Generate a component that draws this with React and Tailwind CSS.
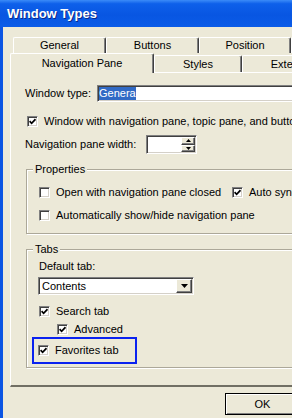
const sunken =
  'border border-t-[#808080] border-l-[#808080] border-b-white border-r-white shadow-[inset_1px_1px_0_#404040,inset_-1px_-1px_0_#d4d0c8]'
const raised =
  'border border-t-white border-l-white border-b-[#404040] border-r-[#404040] shadow-[inset_-1px_-1px_0_#808080] bg-[#ece9d8]'

function Box({ on }) {
  return (
    <span className={`w-[11px] h-[11px] shrink-0 bg-white flex items-center justify-center ${sunken}`}>
      {on && (
        <svg width="7" height="7" viewBox="0 0 7 7">
          <polyline points="0.6,3.2 2.6,5.3 6.5,1.2" fill="none" stroke="#000" strokeWidth="1.7" />
        </svg>
      )}
    </span>
  )
}

function Check({ on, children, className = '' }) {
  return (
    <div className={`flex items-center h-[16px] shrink-0 ${className}`}>
      <Box on={on} />
      <span className="ml-[6px] whitespace-nowrap">{children}</span>
    </div>
  )
}

const backRow = [
  ['General', 'w-[93px]'],
  ['Buttons', 'w-[93px]'],
  ['Position', 'w-[92px]'],
  ['Files', 'w-[80px]']
]

const tabEdge =
  'shrink-0 flex items-center justify-center whitespace-nowrap border-t border-l border-white border-r border-r-[#404040] shadow-[inset_-1px_0_0_#808080] rounded-t-[2px]'

export default function App() {
  return (
    <div className="w-[292px] h-[418px] overflow-hidden flex flex-col bg-[#ece9d8] text-[11px] leading-[13px] text-black font-['Liberation_Sans',Arial,sans-serif]">
      <div className="h-[27px] shrink-0 flex items-center pl-[7px] bg-[linear-gradient(180deg,#3b8bf8_0%,#0e60ea_14%,#0856e2_55%,#0b5ce8_100%)]">
        <span className="text-white font-bold text-[13px] [text-shadow:1px_1px_0_#0b2a8a]">Window Types</span>
      </div>

      <div className="flex flex-1 min-h-0">
        <div className="w-[3px] shrink-0 bg-[#0b55e3]" />
        <div className="flex-1 min-w-0 flex flex-col pt-[10px]">
          {/* back tab row */}
          <div className="flex h-[16px] ml-[10px] shrink-0">
            {backRow.map(([t, w]) => (
              <div key={t} className={`${tabEdge} ${w} h-[16px]`}>{t}</div>
            ))}
          </div>

          {/* front tab row */}
          <div className="flex h-[19px] ml-[7px] shrink-0 items-start">
            <div className={`${tabEdge} relative z-10 w-[144px] h-[20px] bg-[#ece9d8] pb-[1px]`}>Navigation Pane</div>
            <div className={`${tabEdge} w-[88px] h-[17px] mt-[2px]`}>Styles</div>
            <div className={`${tabEdge} w-[137px] h-[17px] mt-[2px]`}>Extended Styles</div>
          </div>

          {/* tab panel */}
          <div className="w-[300px] h-[315px] ml-[7px] shrink-0 flex flex-col border-t border-l border-white border-r border-r-[#716f64] border-b-2 border-b-[#716f64]">
            <div className="flex items-center h-[17px] mt-[12px] ml-[14px]">
              <span className="w-[72px] shrink-0">Window type:</span>
              <div className={`flex-1 h-[17px] bg-white flex items-center pl-[1px] ${sunken}`}>
                <span className="bg-[#316ac5] text-white">Genera</span>
              </div>
            </div>

            <Check on className="mt-[11px] ml-[16px]">Window with navigation pane, topic pane, and buttons</Check>

            <div className="flex items-center h-[19px] mt-[6px] ml-[14px]">
              <span className="w-[121px] shrink-0">Navigation pane width:</span>
              <div className={`w-[51px] h-[19px] bg-white flex justify-end ${sunken} p-[1px]`}>
                <div className="w-[14px] flex flex-col">
                  <div className={`flex-1 flex items-center justify-center ${raised}`}>
                    <svg width="5" height="3" viewBox="0 0 5 3"><polygon points="2.5,0 5,3 0,3" fill="#000" /></svg>
                  </div>
                  <div className={`flex-1 flex items-center justify-center ${raised}`}>
                    <svg width="5" height="3" viewBox="0 0 5 3"><polygon points="0,0 5,0 2.5,3" fill="#000" /></svg>
                  </div>
                </div>
              </div>
            </div>

            <fieldset className="mt-[9px] ml-[15px] w-[270px] border border-[#aca899] shadow-[inset_1px_1px_0_#fff,1px_1px_0_#fff] pb-[10px]">
              <legend className="ml-[6px] px-[2px] bg-[#ece9d8]">Properties</legend>
              <div className="flex mt-[8px] ml-[12px]">
                <Check className="w-[193px]">Open with navigation pane closed</Check>
                <Check on>Auto synchronize</Check>
              </div>
              <Check className="mt-[7px] ml-[12px]">Automatically show/hide navigation pane</Check>
            </fieldset>

            <fieldset className="mt-[9px] ml-[15px] w-[270px] border border-[#aca899] shadow-[inset_1px_1px_0_#fff,1px_1px_0_#fff] pb-[3px]">
              <legend className="ml-[6px] px-[2px] bg-[#ece9d8]">Tabs</legend>
              <div className="mt-[4px] ml-[12px] h-[13px]">Default tab:</div>
              <div className={`mt-[4px] ml-[11px] w-[156px] h-[18px] bg-white flex items-center ${sunken} p-[1px]`}>
                <span className="flex-1 pl-[2px]">Contents</span>
                <div className={`w-[16px] h-full flex items-center justify-center ${raised}`}>
                  <svg width="7" height="4" viewBox="0 0 7 4"><polygon points="0,0 7,0 3.5,4" fill="#000" /></svg>
                </div>
              </div>
              <Check on className="mt-[8px] ml-[12px]">Search tab</Check>
              <Check on className="mt-[2px] ml-[30px]">Advanced</Check>
              <div className="ml-[5px] w-[105px] h-[27px] border-2 border-[#0a22f0] flex items-center pl-[4px]">
                <Check on>Favorites tab</Check>
              </div>
            </fieldset>
          </div>

          <button className="mt-[6px] ml-[222px] w-[75px] h-[22px] shrink-0 border border-black bg-[#ece9d8] shadow-[inset_1px_1px_0_#fff,inset_-1px_-1px_0_#808080] flex items-center justify-center">
            OK
          </button>
        </div>
      </div>
    </div>
  )
}
